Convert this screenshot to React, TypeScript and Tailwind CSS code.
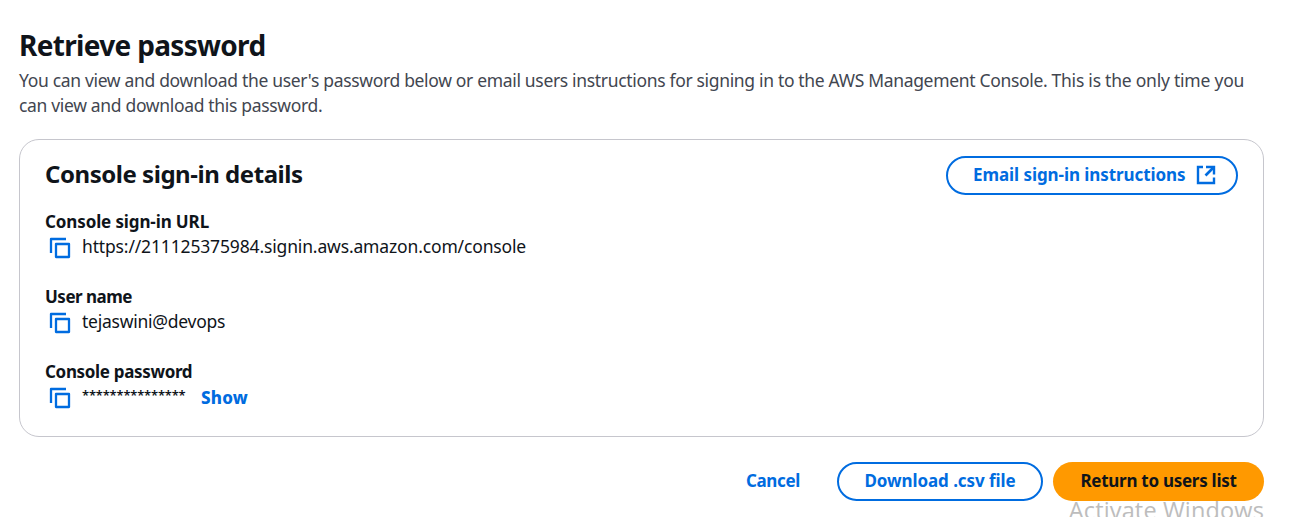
import type { ReactNode } from "react";

function CopyIcon() {
  return (
    <svg width="22" height="22" viewBox="0 0 22 22" fill="none" stroke="#006ce0" strokeWidth="2.3" strokeLinejoin="round" className="mt-[3px] block shrink-0">
      <path d="M2 16V2H17" />
      <path d="M7 7H20V20H7Z" />
    </svg>
  );
}

function ExternalIcon() {
  return (
    <svg width="20" height="20" viewBox="0 0 20 20" fill="none" stroke="#006ce0" strokeWidth="2.4" className="mb-px block shrink-0">
      <path d="M7 2H2V18H18V12.5" />
      <path d="M10 2H18V9.5" />
      <path d="M18 2L9.5 10.5" strokeWidth="2.6" />
    </svg>
  );
}

function Field({ label, labelClass, children }: { label: string; labelClass: string; children: ReactNode }) {
  return (
    <div className="h-[75px]">
      <div className={`h-[25px] text-[17px] leading-[25px] font-bold ${labelClass}`}>{label}</div>
      <div className="flex h-[25px] items-start pl-1 text-[17.5px] leading-[25px]">
        <CopyIcon />
        {children}
      </div>
    </div>
  );
}

export default function App() {
  return (
    <main className="h-[517px] w-[1310px] overflow-hidden bg-white pt-[29px] pl-[19px] font-['Noto_Sans',sans-serif] whitespace-nowrap text-[#0f141a]">
      <h1 className="h-[39px] text-[28px] leading-[33px] font-bold tracking-[-0.68px]">Retrieve password</h1>
      <p className="h-[71px] text-[17.5px] leading-[25px] tracking-[-0.33px] text-[#424650]">
        <span>You can view and download the user's password below or email users instructions for signing in to the AWS Management Console. </span>
        <span className="tracking-[-0.23px]">This is the only time you</span>
        <br />
        <span>can view and download this password.</span>
      </p>
      <section className="h-[298px] w-[1245px] rounded-[20px] border border-[#c6c6cd] pt-4 pr-[25px] pl-[25px]">
        <header className="flex h-[39px] items-center justify-between">
          <h2 className="mb-[3px] text-[24px] leading-[30px] font-bold tracking-[-0.46px]">Console sign-in details</h2>
          <button className="flex h-[39px] w-[292px] items-center justify-between rounded-full border-2 border-[#006ce0] pr-5 pl-[25px] text-[17px] font-bold tracking-[-0.07px] text-[#006ce0]">
            <span className="mb-px">Email sign-in instructions</span>
            <ExternalIcon />
          </button>
        </header>
        <div className="pt-[14px]">
          <Field label="Console sign-in URL" labelClass="tracking-[-0.12px]">
            <span className="pl-[11px] tracking-[-0.15px]">https://211125375984.signin.aws.amazon.com/console</span>
          </Field>
          <Field label="User name" labelClass="tracking-[-0.5px]">
            <span className="pl-[11px] tracking-[-0.25px]">tejaswini@devops</span>
          </Field>
          <Field label="Console password" labelClass="tracking-[-0.33px]">
            <span className="-mt-px w-[130px] pl-[11px] text-[13px] font-semibold tracking-[-0.2px]">***************</span>
            <button className="mt-px text-[17px] font-extrabold tracking-[0.2px] text-[#006ce0]">Show</button>
          </Field>
        </div>
      </section>
      <footer className="flex h-[64px] w-[1245px] items-center justify-end pt-[25px] text-[17px] font-bold">
        <button className="mr-[37px] pb-px tracking-[-0.35px] text-[#006ce0]">Cancel</button>
        <button className="mr-[10px] h-[39px] w-[206px] rounded-full border-2 border-[#006ce0] pb-px tracking-[-0.07px] text-[#006ce0]">Download .csv file</button>
        <button className="h-[39px] w-[211px] rounded-full bg-[#ff9900] pb-px tracking-[-0.27px]">Return to users list</button>
      </footer>
      <div className="-mt-px w-[1245px] text-right font-['Open_Sans',sans-serif] text-[23.5px] leading-[20px] tracking-[0.15px] text-[#bdbdbd]">Activate Windows</div>
    </main>
  );
}
